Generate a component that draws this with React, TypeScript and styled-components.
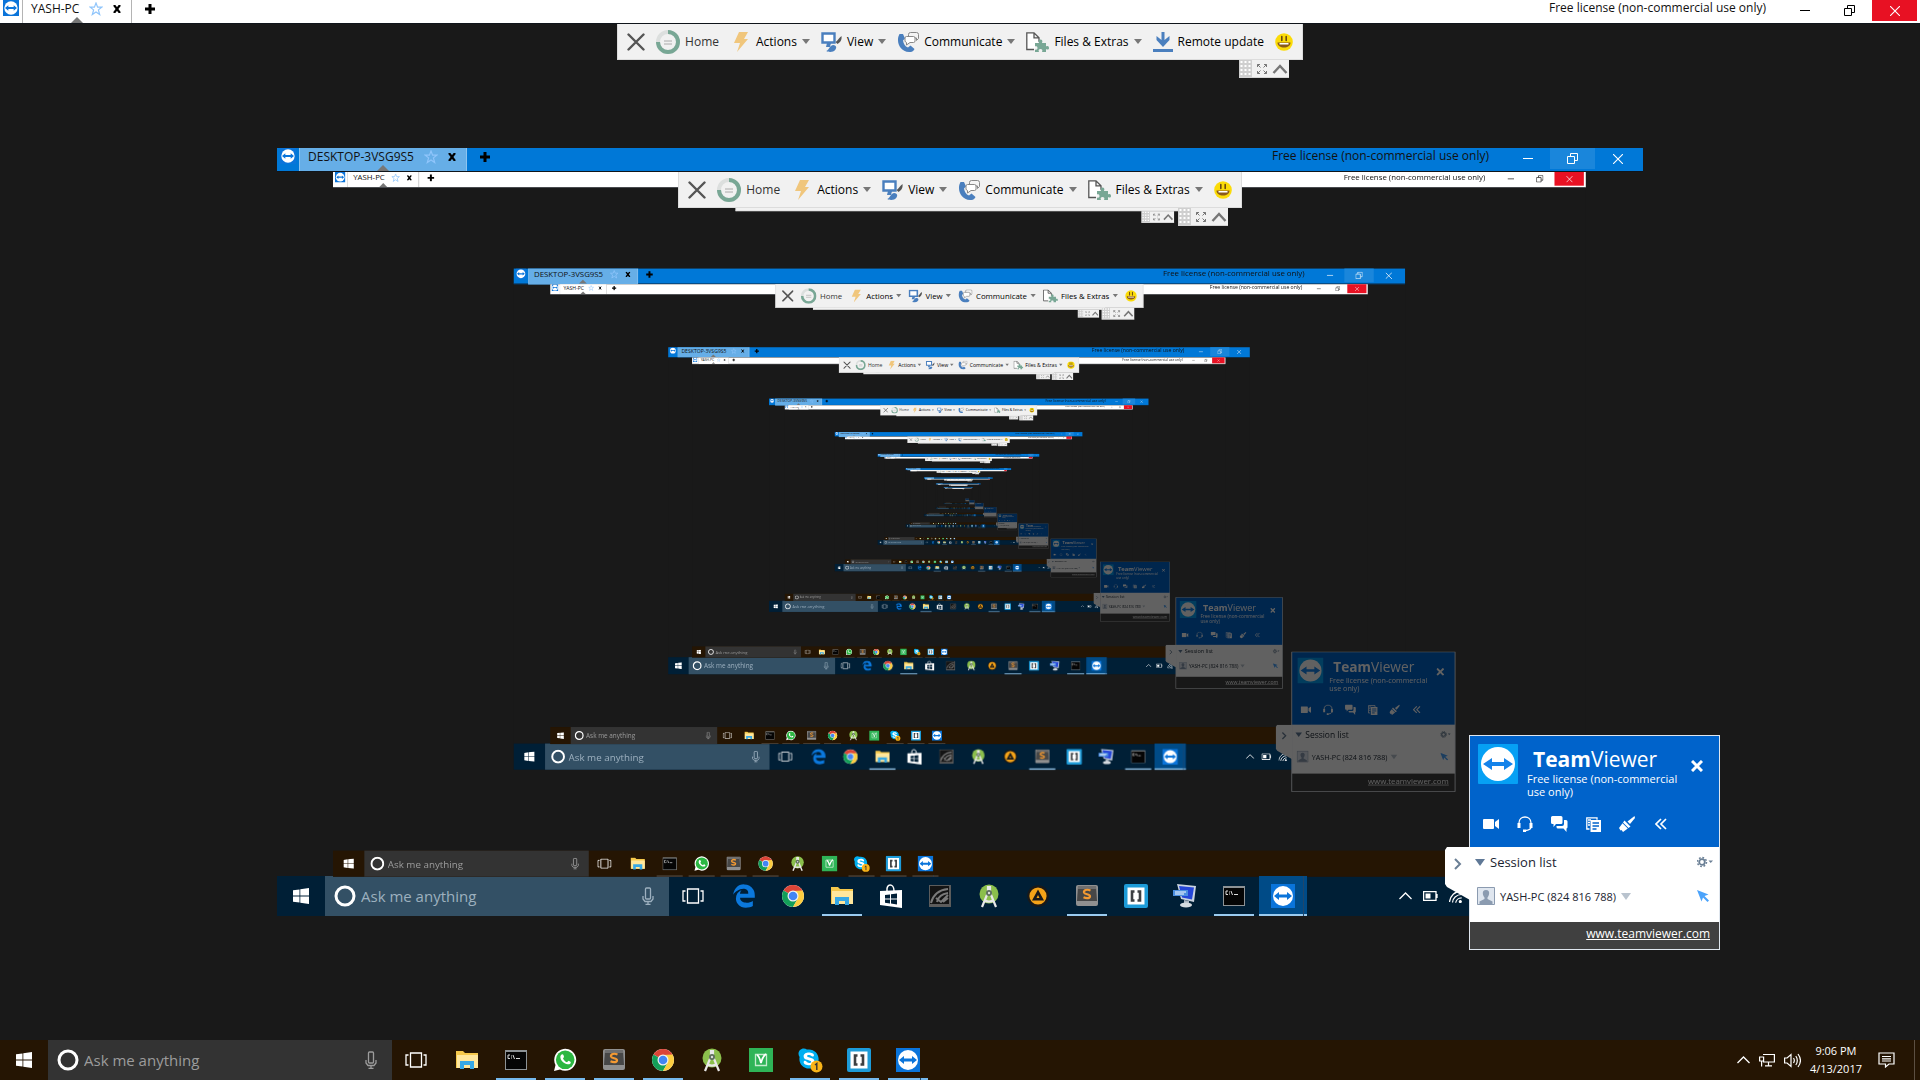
import React from "react";
import styled, { createGlobalStyle, css } from "styled-components";
import { FaEdgeLegacy, FaSkype } from "react-icons/fa";

const UI = `"Open Sans", "Noto Sans", sans-serif`;
const MIRROR_SCALE = 0.6525;
const MAX_DEPTH = 10;

const Global = createGlobalStyle`
  *, *::before, *::after { box-sizing: border-box; }
  html, body, #root { margin: 0; height: 100%; }
  body { background: #191919; overflow: hidden; }
  button, input { font: inherit; color: inherit; border: 0; padding: 0; margin: 0; background: none; outline: 0; }
  svg { display: block; flex: none; }
`;

/* ---------- screens ---------- */

const Desktop = styled.div<{ $nested: boolean }>`
  position: relative;
  display: flex;
  flex-direction: column;
  flex: none;
  width: ${(p) => (p.$nested ? "1920px" : "100%")};
  height: ${(p) => (p.$nested ? "1080px" : "100vh")};
  background: #191919;
  font-family: ${UI};
  font-size: 12px;
  color: #111;
`;

const Viewport = styled.main`
  flex: 1;
  min-height: 0;
  display: flex;
  align-items: center;
  justify-content: center;
`;

const RemoteDesktop = styled.section`
  position: relative;
  display: flex;
  flex-direction: column;
  flex: none;
  width: 1366px;
  height: 768px;
  background: #191919;
`;

const MirrorArea = styled.div`
  flex: 1;
  min-height: 0;
  display: flex;
  justify-content: center;
`;

const Mirror = styled.div`
  flex: none;
  width: 1254px;
  height: 704px;
`;

const MirrorContent = styled.div`
  width: 1920px;
  height: 1080px;
  transform: scale(${MIRROR_SCALE});
  transform-origin: 0 0;
`;

/* ---------- title bar ---------- */

type Tone = "white" | "blue";

const Bar = styled.header<{ $tone: Tone }>`
  flex: none;
  display: flex;
  height: 24px;
  padding-right: 3px;
  border-bottom: 1px solid #10151b;
  background: ${(p) => (p.$tone === "white" ? "#fff" : "#0078d7")};
`;

const BarLogo = styled.div`
  padding: 0 3px;
`;

const Tab = styled.div<{ $tone: Tone }>`
  position: relative;
  display: flex;
  align-items: center;
  gap: 10px;
  padding: 0 10px 5px 8px;
  font-size: 12px;
  line-height: 18px;
  border: solid ${(p) => (p.$tone === "white" ? "#b4b4b4" : "#8cc4f0")};
  border-width: 0 1px;
  background: ${(p) => (p.$tone === "white" ? "#fff" : "#66aee7")};
  &::after {
    content: "";
    position: absolute;
    bottom: 0;
    left: calc(50% - 6px);
    border: 6px solid transparent;
    border-top: 0;
    border-bottom-color: #777;
  }
`;

const IconButton = styled.button`
  display: flex;
  align-items: center;
  justify-content: center;
`;

const NewTab = styled(IconButton)`
  padding: 0 12px 6px;
`;

const License = styled.span`
  margin-left: auto;
  padding-right: 16px;
  font-size: 12px;
  line-height: 15px;
`;

const WindowButton = styled.button<{ $fill?: string; $ink: string }>`
  width: 45px;
  height: 21px;
  display: flex;
  align-items: center;
  justify-content: center;
  background: ${(p) => p.$fill ?? "transparent"};
  color: ${(p) => p.$ink};
`;

function TitleBar({ tone, name }: { tone: Tone; name: string }) {
  const ink = tone === "white" ? "#000" : "#fff";
  return (
    <Bar $tone={tone}>
      <BarLogo>
        <TeamViewerIcon size={16} />
      </BarLogo>
      <Tab $tone={tone}>
        {name}
        <svg width="14" height="14" viewBox="0 0 14 14" fill="none" stroke="#90c5fb" strokeWidth="1.200">
          <path d="M7 1l1.600 4.100h4.200L9.400 7.900l1.300 4.600L7 9.900l-3.700 2.600 1.300-4.600L1.200 5.100h4.200z" />
        </svg>
        <IconButton aria-label="Close tab">
          <svg width="8" height="8" viewBox="0 0 8 8" stroke="#000" strokeWidth="2.200">
            <path d="M1 0l6 8M7 0L1 8" />
          </svg>
        </IconButton>
      </Tab>
      <NewTab aria-label="New tab">
        <svg width="12" height="12" viewBox="0 0 12 12" stroke="#000" strokeWidth="3">
          <path d="M6 1v10M1 6h10" />
        </svg>
      </NewTab>
      <License>Free license (non-commercial use only)</License>
      <WindowButton $ink={ink} aria-label="Minimize">
        <svg width="10" height="10" viewBox="0 0 10 10" stroke="currentColor">
          <path d="M0 4.500h10" />
        </svg>
      </WindowButton>
      <WindowButton $ink={ink} $fill={tone === "blue" ? "#1a86db" : undefined} aria-label="Restore">
        <svg width="11" height="11" viewBox="0 0 11 11" fill="none" stroke="currentColor">
          <path d="M.5 3.500h7v7h-7zM3.500 3V.5h7v7H8" />
        </svg>
      </WindowButton>
      <WindowButton $ink="#fff" $fill={tone === "white" ? "#e81123" : undefined} aria-label="Close">
        <svg width="10" height="10" viewBox="0 0 10 10" stroke="currentColor" strokeWidth="1.100">
          <path d="M0 0l10 10M10 0L0 10" />
        </svg>
      </WindowButton>
    </Bar>
  );
}

/* ---------- session toolbar ---------- */

const ToolbarDock = styled.div`
  position: absolute;
  z-index: 2;
  top: 24px;
  left: 0;
  right: 0;
  display: flex;
  justify-content: center;
  pointer-events: none;
`;

const ToolbarColumn = styled.div`
  display: flex;
  flex-direction: column;
  align-items: flex-end;
  pointer-events: auto;
`;

const ToolbarRow = styled.nav`
  display: flex;
  align-items: center;
  height: 36px;
  padding: 0 9px;
  gap: 11px;
  background: #f1f1f1;
  border: 1px solid #dcdcdc;
  border-top: 0;
`;

const Tool = styled.button`
  display: flex;
  align-items: center;
  gap: 5px;
  font-size: 12px;
  line-height: 20px;
  white-space: nowrap;
`;

const ToolText = styled.span<{ $soft?: boolean }>`
  color: ${(p) => (p.$soft ? "#333" : "#000")};
`;

const Caret = styled.span`
  border: 4px solid transparent;
  border-top: 5px solid #777;
  border-bottom: 0;
`;

const Handle = styled.div`
  display: flex;
  align-items: center;
  gap: 4px;
  height: 18px;
  margin-right: 14px;
  padding-right: 1px;
  background: #f1f1f1;
  border-bottom: 1px solid #d4d4d4;
`;

function Toolbar({ withUpdate }: { withUpdate: boolean }) {
  return (
    <ToolbarDock>
      <ToolbarColumn>
        <ToolbarRow>
          <Tool aria-label="Close session">
            <svg width="18" height="18" viewBox="0 0 18 18" stroke="#555" strokeWidth="2.400" strokeLinecap="round">
              <path d="M1.500 1.500l15 15M16.500 1.500l-15 15" />
            </svg>
          </Tool>
          <Tool>
            <svg width="24" height="24" viewBox="0 0 24 24" fill="none">
              <circle cx="12" cy="12" r="10" stroke="#dcdfde" strokeWidth="4" />
              <path d="M12 2a10 10 0 1 1-10 10" stroke="#78a795" strokeWidth="4" />
              <path d="M8 11h8M8 14h8" stroke="#aaa" />
            </svg>
            <ToolText $soft>Home</ToolText>
          </Tool>
          <Tool>
            <svg width="21" height="20" viewBox="-2 0 21 20">
              <path d="M7 0h9l-4 7h4L5 20l3-9H2z" fill="#f0c67c" />
            </svg>
            <ToolText>Actions</ToolText>
            <Caret />
          </Tool>
          <Tool>
            <svg width="21" height="20" viewBox="0 0 21 20">
              <path d="M1.500 1.500h12v9h-12z" fill="#fff" stroke="#4a7fbe" strokeWidth="2.400" />
              <path d="M6 11h4l-1 4H5z" fill="#4a7fbe" />
              <path d="M20.500 4c.5 4-1 6-4 8l-2-2c2-1 3-4 6-6z" fill="#555" />
              <path d="M5 19c3-.5 3-5 7-6 3 0 4 2 2.500 4.500C12 21 7 20 5 19z" fill="#4a7fbe" />
            </svg>
            <ToolText>View</ToolText>
            <Caret />
          </Tool>
          <Tool>
            <svg width="22" height="20" viewBox="0 0 22 20">
              <path d="M2.500 2c-4 7 0 18.500 11 18 2 0 3.500-1.500 4-3l-4-3.500-2.500 2c-3-1-4.500-4-5-7l2-2-2-4.500z" fill="#4a7fbe" />
              <path d="M13.500.5h6a2 2 0 0 1 2 2v4l-2 2V6h-6a2 2 0 0 1-2-2V2.500a2 2 0 0 1 2-2z" fill="#f4f4f4" stroke="#888" />
              <path d="M9.500 4.500h7a1.500 1.500 0 0 1 1.500 1.500v3a1.500 1.500 0 0 1-1.500 1.500H13L9.500 13v-2.500A2 2 0 0 1 8 9V6a1.500 1.500 0 0 1 1.500-1.500z" fill="#fff" stroke="#888" />
            </svg>
            <ToolText>Communicate</ToolText>
            <Caret />
          </Tool>
          <Tool>
            <svg width="23" height="20" viewBox="0 0 23 20">
              <path d="M8 17.500H.8V.8H8l5 5v4M8 .8v5h5" fill="#fff" stroke="#555" strokeWidth="1.300" />
              <path d="M9 11h4c-1-2 0-3.500 1.500-3.500S17 9 16 11h4v3.500c2-1 3 0 3 1.500s-1 2-3 1V20h-4c1-2 0-3-1.500-3S12 18 13 20H9v-2.500c1.500.5 2.500 0 2.500-1.500S10.500 14 9 14.500z" fill="#78a795" />
            </svg>
            <ToolText>Files &amp; Extras</ToolText>
            <Caret />
          </Tool>
          {withUpdate && (
            <Tool>
              <svg width="20" height="20" viewBox="0 0 20 20" fill="#4a7fbe">
                <path d="M8.500 0h3v8l5-4v4l-6.500 7L3.500 8V4l5 4zM0 17h20v3H0z" />
              </svg>
              <ToolText>Remote update</ToolText>
            </Tool>
          )}
          <Tool aria-label="Feedback">
            <svg width="18" height="18" viewBox="0 0 18 18">
              <circle cx="9" cy="9" r="8.800" fill="#fbdb08" />
              <path d="M6.800 3.500v4M11.200 3.500v4" stroke="#6b4a12" strokeWidth="1.600" strokeLinecap="round" />
              <path d="M2.500 9.500h13c0 3.500-3 5-6.500 5s-6.500-1.500-6.500-5z" fill="#8a5a18" />
              <path d="M4.500 10h9v1.500h-9z" fill="#fff" />
            </svg>
          </Tool>
        </ToolbarRow>
        <Handle>
          <svg width="13" height="17" viewBox="0 0 13 17">
            <path d="M0 0h13v17H0z" fill="#cfcfcf" />
            <path d="M2.500 1v15M6.500 1v15M10.500 1v15" stroke="#fff" strokeWidth="2" strokeDasharray="2 2" />
          </svg>
          <IconButton aria-label="Full screen">
            <svg width="12" height="12" viewBox="0 0 12 12" fill="none" stroke="#777">
              <path d="M1.500 4V1.500H4M1.500 1.500l3 3M8 1.500h2.500V4M10.500 1.500l-3 3M1.500 8v2.500H4M1.500 10.500l3-3M8 10.500h2.500V8M10.500 10.500l-3-3" />
            </svg>
          </IconButton>
          <IconButton aria-label="Collapse toolbar">
            <svg width="16" height="12" viewBox="0 0 16 12" fill="none" stroke="#777" strokeWidth="2.400">
              <path d="M1.500 10L8 3l6.500 7" />
            </svg>
          </IconButton>
        </Handle>
      </ToolbarColumn>
    </ToolbarDock>
  );
}

/* ---------- taskbar ---------- */

type Theme = "brown" | "navy";
type RunState = "idle" | "open" | "active";

const TaskbarRow = styled.footer<{ $theme: Theme }>`
  flex: none;
  display: flex;
  height: 40px;
  color: #fff;
  background: ${(p) => (p.$theme === "brown" ? "#251503" : "#001f36")};
`;

const Start = styled(IconButton)`
  width: 48px;
`;

const Search = styled.label<{ $theme: Theme }>`
  display: flex;
  align-items: center;
  width: 344px;
  padding: 0 15px 0 9px;
  gap: 5px;
  background: ${(p) => (p.$theme === "brown" ? "#333333" : "#335065")};
  color: ${(p) => (p.$theme === "brown" ? "#9c9c9c" : "#9db0bf")};
`;

const SearchInput = styled.input`
  flex: 1;
  min-width: 0;
  font-size: 15px;
  line-height: 20px;
  &::placeholder {
    color: inherit;
    opacity: 1;
  }
`;

const Apps = styled.div`
  display: flex;
  gap: 1px;
  & > :first-child {
    margin-right: 2px;
  }
`;

const AppButton = styled.button<{ $state: RunState; $line: string; $stacked?: boolean }>`
  position: relative;
  width: 48px;
  display: flex;
  align-items: center;
  justify-content: center;
  ${(p) => p.$state === "active" && css`background: #004b87;`}
  ${(p) =>
    p.$state !== "idle" &&
    css`
      &::after {
        content: "";
        position: absolute;
        bottom: 0;
        left: ${p.$state === "active" ? "0" : "4px"};
        right: ${p.$state === "active" ? "0" : "4px"};
        height: 2px;
        background: ${p.$line};
      }
    `}
  ${(p) =>
    p.$stacked &&
    css`
      &::before {
        content: "";
        position: absolute;
        z-index: 1;
        right: ${p.$state === "active" ? "3px" : "11px"};
        bottom: 0;
        width: 1px;
        height: ${p.$state === "active" ? "40px" : "2px"};
        background: #21466b;
      }
    `}
`;

const Tray = styled.div<{ $compact: boolean }>`
  margin-left: auto;
  display: flex;
  align-items: center;
  gap: ${(p) => (p.$compact ? "11px" : "9px")};
  padding-right: ${(p) => (p.$compact ? "181px" : "5px")};
`;

const Clock = styled.time`
  font-size: 11px;
  line-height: 18px;
  text-align: center;
  white-space: pre-line;
`;

const ShowDesktop = styled.span`
  width: 1px;
  height: 40px;
  background: #5c4f42;
`;

function TeamViewerIcon({ size = 24 }: { size?: number }) {
  return (
    <svg width={size} height={size} viewBox="0 0 24 24">
      <path d="M0 0h24v24H0z" fill="#0a74da" />
      <circle cx="12" cy="12" r="10" fill="#fff" />
      <path d="M3 12l5-4v2.500h8V8l5 4-5 4v-2.500H8V16z" fill="#0a74da" />
    </svg>
  );
}

const icons: Record<string, React.ReactNode> = {
  taskview: (
    <svg width="22" height="16" viewBox="0 0 22 16" fill="none" stroke="#fff" strokeWidth="1.300">
      <path d="M5.500 1h11v14h-11zM3.500 3H1v10h2.500M18.500 3H21v10h-2.500" />
    </svg>
  ),
  edge: <FaEdgeLegacy size={24} color="#0b78dc" />,
  chrome: (
    <svg width="24" height="24" viewBox="0 0 24 24">
      <circle cx="12" cy="12" r="11" fill="#fff" />
      <path d="M12 12L2.500 6.500A11 11 0 0 1 21.500 6.500z" fill="#dc4437" />
      <path d="M2.500 6.500A11 11 0 0 0 12 23l4.800-8.300L12 12z" fill="#139f59" />
      <path d="M12 23a11 11 0 0 0 9.500-16.500L12 7v5l4.600 2.700z" fill="#fdcd40" />
      <circle cx="12" cy="12" r="5.500" fill="#f2f2f2" />
      <circle cx="12" cy="12" r="4.300" fill="#4385f3" />
    </svg>
  ),
  explorer: (
    <svg width="22" height="20" viewBox="0 0 22 20">
      <path d="M0 1h7l2 2h13v15H0z" fill="#f5c84c" />
      <path d="M1 5h21v13H1z" fill="#ffe79d" />
      <path d="M4 11h14v8h-4v-4H8v4H4z" fill="#36a8e6" />
    </svg>
  ),
  store: (
    <svg width="22" height="24" viewBox="0 0 22 24">
      <path d="M7 7c-1-8 7-8 7 0" fill="none" stroke="#fff" strokeWidth="1.500" />
      <path d="M0 7l22-1v18L0 21z" fill="#fff" />
      <path d="M5 11l5-.6v4H5zM11 10.300l6-.7v5h-6zM5 15.400h5v4l-5-.7zM11 15.400h6v5l-6-.8z" fill="#001f36" />
    </svg>
  ),
  nvidia: (
    <svg width="22" height="22" viewBox="0 0 22 22">
      <path d="M0 0h22v22H0z" fill="#5c5c5c" />
      <path d="M1 1h19v18H1z" fill="#141414" />
      <path d="M2 18C4 10 9 5 19 4M8 17c1-5 4-8 11-9M7 13l5 4 7-7M14 17l5-4" fill="none" stroke="#7a7a7a" strokeWidth="2" />
    </svg>
  ),
  studio: (
    <svg width="22" height="24" viewBox="0 0 22 24">
      <circle cx="11" cy="10" r="9.500" fill="#8bbf4c" />
      <path d="M10 3h2v3h-2zM11 6l-7 17M11 6l7 17M6 16c3 2 7 2 10 0" stroke="#e8e8e8" strokeWidth="2.200" fill="none" />
      <circle cx="11" cy="9" r="3" fill="#5d6f5c" />
      <circle cx="11" cy="9" r="1.200" fill="#ddd" />
    </svg>
  ),
  aimp: (
    <svg width="22" height="22" viewBox="0 0 22 22">
      <circle cx="11" cy="11" r="10.800" fill="#191919" />
      <circle cx="11" cy="11" r="8.600" fill="#f5a318" />
      <path d="M11 4.500l6 11h-12zM11 10l-1.500 3h3z" fill="#191919" fillRule="evenodd" />
    </svg>
  ),
  sublime: (
    <svg width="22" height="22" viewBox="0 0 22 22">
      <rect width="22" height="21" rx="2" fill="#909090" />
      <path d="M2 1h18l1 15H1z" fill="#474747" />
      <path d="M2 1h18v3H2z" fill="#6f6f6f" />
      <path d="M14.500 5.500C11 4 7.500 5 8 7.500c.5 2 6 1.500 6 3.700s-3.500 2.500-6.500 1" fill="none" stroke="#f49a32" strokeWidth="2.200" />
    </svg>
  ),
  brackets: (
    <svg width="24" height="24" viewBox="0 0 24 24">
      <rect width="24" height="24" rx="2" fill="#1d9bd8" />
      <path d="M3.500 3.500h17v17h-17z" fill="#fff" />
      <path d="M10.500 7.500H8v9h2.500M13.500 7.500H16v9h-2.500" fill="none" stroke="#3c3f42" strokeWidth="2.600" />
    </svg>
  ),
  pc: (
    <svg width="24" height="24" viewBox="0 0 24 24">
      <path d="M4 0l19 2-2 16-13-3z" fill="#c9d3e0" />
      <path d="M6 2l15 1.500-2 12-10-2z" fill="#2546d8" />
      <path d="M0 6h15v6H0z" fill="#4b8ee0" />
      <path d="M2 8h11M2 10h9" stroke="#fff" />
      <path d="M11 16l5 1v3h-5z" fill="#aab4c0" />
      <ellipse cx="13" cy="21" rx="6" ry="2.600" fill="#d6dbe0" />
    </svg>
  ),
  cmd: (
    <svg width="22" height="20" viewBox="0 0 22 20">
      <path d="M0 0h22v20H0z" fill="#8d9295" />
      <path d="M1 2h20v17H1z" fill="#050505" />
      <path d="M5 5H3v3.500h2M6.500 5.500v1M6.500 7.500v1M8 5l1.500 4M11 8.500h4" stroke="#ddd" fill="none" />
    </svg>
  ),
  whatsapp: (
    <svg width="24" height="24" viewBox="0 0 24 24">
      <path d="M1 23l1.500-6A11 11 0 1 1 7 21.500z" fill="#fff" />
      <circle cx="12.200" cy="11.800" r="9.300" fill="#2cb742" />
      <path d="M8 7c2-2 3 1 3 2l-1 1.500c1 2 2 3 4 3.800l1.500-1.500c1.500.5 3 1.200 2 2.700C13 19 5 11 8 7z" fill="#fff" />
    </svg>
  ),
  music: (
    <svg width="24" height="24" viewBox="0 0 24 24">
      <path d="M0 0h24v24H0z" fill="#2fb457" />
      <path d="M6.500 6.500h11v11h-11z" fill="none" stroke="#c4ecce" strokeWidth="1.300" />
      <path d="M8 7c2 1 3 4 4 8 1-4 2-7 5-9" fill="none" stroke="#fff" strokeWidth="1.800" />
    </svg>
  ),
  skype: (
    <svg width="26" height="26" viewBox="0 0 26 26">
      <circle cx="12" cy="12" r="8" fill="#fff" />
      <FaSkype x={0} y={0} size={24} color="#00aff0" />
      <circle cx="19.500" cy="19.500" r="6" fill="#f9b418" />
      <path d="M18 18l1.800-1.500V23" fill="none" stroke="#333" strokeWidth="1.400" />
    </svg>
  ),
  teamviewer: <TeamViewerIcon />,
};

type AppEntry = [icon: string, label: string, state: RunState, stacked?: boolean];

const brownApps: AppEntry[] = [
  ["taskview", "Task view", "idle"],
  ["explorer", "File Explorer", "idle"],
  ["cmd", "Command Prompt", "open"],
  ["whatsapp", "WhatsApp", "open"],
  ["sublime", "Sublime Text", "open"],
  ["chrome", "Chrome", "open"],
  ["studio", "Android Studio", "idle"],
  ["music", "Music", "idle"],
  ["skype", "Skype", "open"],
  ["brackets", "Brackets", "open"],
  ["teamviewer", "TeamViewer", "open", true],
];

const navyApps: AppEntry[] = [
  ["taskview", "Task view", "idle"],
  ["edge", "Edge", "idle"],
  ["chrome", "Chrome", "idle"],
  ["explorer", "File Explorer", "open"],
  ["store", "Store", "idle"],
  ["nvidia", "NVIDIA", "idle"],
  ["studio", "Android Studio", "idle"],
  ["aimp", "AIMP", "idle"],
  ["sublime", "Sublime Text", "open"],
  ["brackets", "Brackets", "idle"],
  ["pc", "Remote PC", "idle"],
  ["cmd", "Command Prompt", "open"],
  ["teamviewer", "TeamViewer", "active", true],
];

function Taskbar({ theme, nested }: { theme: Theme; nested: boolean }) {
  const apps = theme === "brown" ? brownApps : navyApps;
  const line = theme === "navy" ? "#9acbf0" : nested ? "#4d453c" : "#76b9ed";
  return (
    <TaskbarRow $theme={theme}>
      <Start aria-label="Start">
        <svg width="16" height="16" viewBox="0 0 16 16" fill="#fff">
          <path d="M0 2.300L6.500 1.400v6.200H0zM7.300 1.300L16 0v7.600H7.300zM0 8.400h6.500v6.200L0 13.700zM7.300 8.400H16V16l-8.700-1.200z" />
        </svg>
      </Start>
      <Search $theme={theme}>
        <svg width="22" height="22" viewBox="0 0 22 22" fill="none" stroke="#fff" strokeWidth="3">
          <circle cx="11" cy="11" r="9" />
        </svg>
        <SearchInput type="text" placeholder="Ask me anything" aria-label="Ask me anything" />
        <svg width="12" height="18" viewBox="0 0 12 18" fill="none" stroke="currentColor" strokeWidth="1.300">
          <rect x="3.500" y="1" width="5" height="11" rx="1" />
          <path d="M1 9v3l2 2.500h6l2-2.500V9M6 14.500v3M3.500 17.300h5" />
        </svg>
      </Search>
      <Apps>
        {apps.map(([icon, label, state, stacked]) => (
          <AppButton key={icon} aria-label={label} $state={state} $line={line} $stacked={stacked}>
            {icons[icon]}
          </AppButton>
        ))}
      </Apps>
      <Tray $compact={theme === "navy"}>
        <svg width="13" height="8" viewBox="0 0 13 8" fill="none" stroke="#fff" strokeWidth="1.300">
          <path d="M.5 7l6-6 6 6" />
        </svg>
        {theme === "navy" ? (
          <>
            <svg width="15" height="10" viewBox="0 0 15 10">
              <path d="M.6.6h12.400v8.800H.6zM14 3v4" fill="none" stroke="#fff" strokeWidth="1.300" />
              <path d="M2.500 2.500h5v5h-5z" fill="#fff" />
            </svg>
            <svg width="13" height="13" viewBox="0 0 13 13" fill="none" stroke="#fff" strokeWidth="1.200">
              <path d="M.5 12C1 6 6 1 12.500.8M3.500 12.500c0-4 4-8 9-8M6.700 12.800c.3-2.500 2.500-5 6-5" />
              <circle cx="11.300" cy="11.500" r="1" fill="#fff" />
            </svg>
          </>
        ) : (
          <>
            <svg width="16" height="14" viewBox="0 0 16 14" fill="none" stroke="#fff" strokeWidth="1.200">
              <path d="M4 1.500h11.400v7.500H4M9.500 9v3.500M6 12.800h7M.6 4h4v4h-4zM2.600 8v5.500" />
            </svg>
            <svg width="17" height="15" viewBox="0 0 17 15" fill="none" stroke="#fff" strokeWidth="1.200">
              <path d="M.6 5h2.500L7 1.500v12L3.100 10H.6zM9.500 5c1 1.500 1 3.500 0 5M11.800 3c2 2.500 2 6.500 0 9M14 1c3 4 3 9 0 13" />
            </svg>
            <Clock>{"9:06 PM\n4/13/2017"}</Clock>
            <svg width="34" height="16" viewBox="0 0 34 16" fill="none" stroke="#fff" strokeWidth="1.200">
              <path d="M8 1h15v11h-5l-3.500 3v-3H8zM11 4.500h9M11 6.800h9M11 9h9" />
            </svg>
            <ShowDesktop />
          </>
        )}
      </Tray>
    </TaskbarRow>
  );
}

/* ---------- session panel ---------- */

const Panel = styled.aside<{ $dim: boolean }>`
  position: absolute;
  z-index: 3;
  right: 200px;
  bottom: 130px;
  width: 251px;
  border: 1px solid #dfe6ee;
  background: #fff;
  filter: ${(p) => (p.$dim ? "brightness(0.38)" : "none")};
`;

const PanelHead = styled.div`
  display: flex;
  flex-direction: column;
  height: 111px;
  padding: 8px 16px 0 8px;
  background: #0063cb;
  color: #fff;
`;

const Brand = styled.div`
  display: flex;
  height: 56px;
`;

const BrandText = styled.div`
  flex: 1;
  padding-left: 9px;
  font-size: 11px;
  line-height: 13px;
`;

const BrandName = styled.h1`
  margin: 2px 0 0;
  padding-left: 6px;
  font-size: 21px;
  line-height: 26px;
  font-weight: 400;
`;

const Strong = styled.b`
  font-weight: 700;
`;

const ClosePanel = styled(IconButton)`
  height: 44px;
`;

const PanelTools = styled.div`
  display: flex;
  gap: 16px;
  padding: 15px 4px 0;
`;

const PanelTool = styled(IconButton)`
  width: 18px;
  height: 18px;
`;

const PanelBody = styled.div`
  height: 75px;
  padding: 4px 6px 0 5px;
`;

const SessionHead = styled.div`
  display: flex;
  align-items: center;
  gap: 5px;
  height: 22px;
  font-size: 13px;
  color: #1a2430;
`;

const Spacer = styled.span`
  flex: 1;
`;

const Wedge = styled.span<{ $color: string }>`
  border: 5px solid transparent;
  border-top: 7px solid ${(p) => p.$color};
  border-bottom: 0;
`;

const SessionRow = styled.div`
  display: flex;
  align-items: center;
  gap: 5px;
  margin-top: 14px;
  padding: 0 4px 0 2px;
  height: 18px;
  font-size: 11px;
  color: #1a2430;
`;

const PanelFoot = styled.div`
  height: 27px;
  padding: 3px 9px 0;
  background: #404040;
  color: #fff;
  text-align: right;
  font-size: 12px;
  line-height: 18px;
`;

const Link = styled.a`
  color: inherit;
  text-decoration: underline;
`;

const Flap = styled.button`
  position: absolute;
  top: 111px;
  left: -26px;
  width: 26px;
  height: 53px;
`;

function SessionPanel({ dim }: { dim: boolean }) {
  return (
    <Panel $dim={dim}>
      <Flap aria-label="Collapse panel">
        <svg width="26" height="53" viewBox="0 0 26 53">
          <path d="M3 0h23v53L3 40 1 37V3z" fill="#fff" />
          <path d="M11 12l5 5-5 5" fill="none" stroke="#6a7f95" strokeWidth="2" />
        </svg>
      </Flap>
      <PanelHead>
        <Brand>
          <svg width="40" height="40" viewBox="0 0 40 40">
            <rect width="40" height="40" rx="1" fill="#06a0f4" />
            <circle cx="20" cy="20" r="17" fill="#fff" />
            <path d="M5 20l9-6v4h12v-4l9 6-9 6v-4H14v4z" fill="#1483ea" />
          </svg>
          <BrandText>
            <BrandName>
              <Strong>Team</Strong>Viewer
            </BrandName>
            Free license (non-commercial
            <br />
            use only)
          </BrandText>
          <ClosePanel aria-label="Close panel">
            <svg width="12" height="12" viewBox="0 0 12 12" stroke="#fff" strokeWidth="3">
              <path d="M1 1l10 10M11 1L1 11" />
            </svg>
          </ClosePanel>
        </Brand>
        <PanelTools>
          <PanelTool aria-label="Video">
            <svg width="16" height="12" viewBox="0 0 16 12" fill="#fff">
              <rect y="1" width="11" height="10" rx="1" />
              <path d="M16 1v10l-4-3V4z" />
            </svg>
          </PanelTool>
          <PanelTool aria-label="Audio">
            <svg width="16" height="16" viewBox="0 0 16 16" fill="none" stroke="#fff" strokeWidth="1.300">
              <path d="M2 7c0-8 12-8 12 0M14 11c0 2-2 3-5 3.500" />
              <path d="M.5 7h3v5h-3zM12.500 7h3v5h-3zM6 13.500h3V16H6z" fill="#fff" stroke="none" />
            </svg>
          </PanelTool>
          <PanelTool aria-label="Chat">
            <svg width="17" height="16" viewBox="0 0 17 16" fill="#fff">
              <path d="M1.500 0h8.500a1.500 1.500 0 0 1 1.500 1.500v5A1.500 1.500 0 0 1 10 8H5l-2.500 3V8h-1A1.500 1.500 0 0 1 0 6.500v-5A1.500 1.500 0 0 1 1.500 0z" />
              <path d="M13 4h2a1.500 1.500 0 0 1 1.500 1.500V11a1.500 1.500 0 0 1-1 1.500V16l-3-3.500H7A1.500 1.500 0 0 1 5.500 11v-1H11a2 2 0 0 0 2-2z" />
            </svg>
          </PanelTool>
          <PanelTool aria-label="Files">
            <svg width="15" height="15" viewBox="0 0 15 15" fill="none" stroke="#fff" strokeWidth="1.300">
              <path d="M3.500 12H.8V.8H11v2" />
              <path d="M2 3h3M2 5.500h2M2 8h2" />
              <path d="M4.500 3H15v12H4.500z" fill="#fff" stroke="none" />
              <path d="M6.500 6h6.500M6.500 9h6.500M6.500 12h4" stroke="#0063cb" />
            </svg>
          </PanelTool>
          <PanelTool aria-label="Whiteboard">
            <svg width="16" height="16" viewBox="0 0 16 16" fill="#fff">
              <path d="M15.500 0L16 2l-5 6-2.500-2.500z" />
              <path d="M5.500 4.500l6 6-2 1.500-5.500-5.500zM3.500 7.200l5.300 5.300L4 16l-1.500-2-1 .5L0 12z" />
            </svg>
          </PanelTool>
          <PanelTool aria-label="Collapse">
            <svg width="12" height="12" viewBox="0 0 12 12" fill="none" stroke="#fff" strokeWidth="1.700">
              <path d="M6 1L1 6l5 5M11 1L6 6l5 5" />
            </svg>
          </PanelTool>
        </PanelTools>
      </PanelHead>
      <PanelBody>
        <SessionHead>
          <Wedge $color="#5f7896" />
          Session list
          <Spacer />
          <svg width="16" height="12" viewBox="0 0 16 12" fill="none">
            <circle cx="5" cy="6" r="4.500" stroke="#6a7f95" strokeWidth="1.500" strokeDasharray="1.800 1.700" />
            <circle cx="5" cy="6" r="2.800" stroke="#6a7f95" strokeWidth="1.800" />
            <path d="M11.500 4.500H16L13.700 7z" fill="#6a7f95" />
          </svg>
        </SessionHead>
        <SessionRow>
          <svg width="18" height="18" viewBox="0 0 18 18">
            <path d="M.5.5h17v17H.5z" fill="#dfe6ef" stroke="#8b9bb0" />
            <path d="M9 3c5 0 3 6 1.500 7.500V12l5 2.500V17h-13v-2.500l5-2.500v-1.500C6 9 4 3 9 3z" fill="#8b9bb0" />
          </svg>
          YASH-PC (824 816 788)
          <Wedge $color="#b9c3ce" />
          <Spacer />
          <svg width="12" height="12" viewBox="0 0 12 12" fill="#4ba3fb">
            <path d="M0 0l11.500 4.500-4 1.500L12 10.500 10.500 12 6 7.500l-1.500 4z" />
          </svg>
        </SessionRow>
      </PanelBody>
      <PanelFoot>
        <Link href="#teamviewer">www.teamviewer.com</Link>
      </PanelFoot>
    </Panel>
  );
}

/* ---------- the session seen inside itself ---------- */

function LocalScreen({ depth }: { depth: number }) {
  const nested = depth > 0;
  return (
    <Desktop $nested={nested}>
      <TitleBar tone="white" name="YASH-PC" />
      <Viewport>{depth < MAX_DEPTH && <RemoteScreen depth={depth} />}</Viewport>
      <Taskbar theme="brown" nested={nested} />
      <Toolbar withUpdate />
      <SessionPanel dim={nested} />
    </Desktop>
  );
}

function RemoteScreen({ depth }: { depth: number }) {
  return (
    <RemoteDesktop>
      <TitleBar tone="blue" name="DESKTOP-3VSG9S5" />
      <MirrorArea>
        <Mirror>
          <MirrorContent inert aria-hidden="true">
            <LocalScreen depth={depth + 1} />
          </MirrorContent>
        </Mirror>
      </MirrorArea>
      <Taskbar theme="navy" nested />
      <Toolbar withUpdate={false} />
    </RemoteDesktop>
  );
}

export default function App() {
  return (
    <>
      <Global />
      <LocalScreen depth={0} />
    </>
  );
}
